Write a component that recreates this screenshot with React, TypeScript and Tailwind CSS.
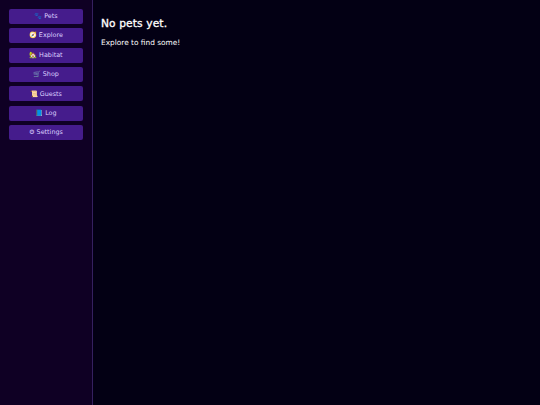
const items = [
  { icon: "🐾", label: "Pets" },
  { icon: "🧭", label: "Explore" },
  { icon: "🏡", label: "Habitat" },
  { icon: "🛒", label: "Shop" },
  { icon: "📜", label: "Guests" },
  { icon: "📘", label: "Log" },
  { icon: "⚙", label: "Settings" },
];

export default function App() {
  return (
    <div className="flex h-[405px] w-[540px] overflow-hidden bg-[#030014] text-white font-['DejaVu_Sans',sans-serif]">
      <aside className="flex h-full w-[93px] shrink-0 flex-col gap-[4.4px] border-r border-[#35205f] bg-[#0f0024] pl-[8.5px] pr-[8.8px] pt-[8.8px]">
        {items.map((item) => (
          <button
            key={item.label}
            className="flex h-[15px] w-full items-center justify-center gap-[2px] rounded-[2px] bg-[#451c8c] pt-[1px] text-[6.4px] text-[#dccfff]"
          >
            <span>{item.icon}</span>
            <span>{item.label}</span>
          </button>
        ))}
      </aside>
      <main className="flex-1 p-[8px]">
        <h1 className="mt-[9px] text-[10.7px] leading-[14px] font-normal tracking-[0.1px] [-webkit-text-stroke:0.3px_white]">No pets yet.</h1>
        <p className="mt-[7px] text-[7.4px] leading-[9px]">Explore to find some!</p>
      </main>
    </div>
  );
}
